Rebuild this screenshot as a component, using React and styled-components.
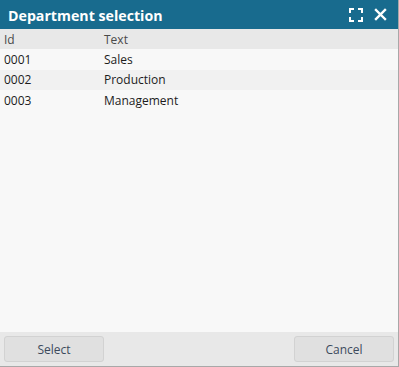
import styled, { createGlobalStyle } from "styled-components";

const GlobalStyle = createGlobalStyle`
  html, body, #root {
    margin: 0;
    padding: 0;
    height: 100%;
  }
  body {
    font-family: "Open Sans", "Liberation Sans", sans-serif;
    background: #ffffff;
  }
`;

const Dialog = styled.div`
  box-sizing: border-box;
  width: 399px;
  height: 367px;
  display: flex;
  flex-direction: column;
  border-right: 1px solid #a8a8a8;
  border-bottom: 1px solid #a8a8a8;
  background: #f8f8f8;
`;

const TitleBar = styled.div`
  height: 29px;
  flex: none;
  display: flex;
  align-items: center;
  justify-content: space-between;
  padding: 0 11px 0 8px;
  background: #186b8e;
  color: #ffffff;
`;

const Title = styled.div`
  font-size: 14.2px;
  font-weight: 700;
  padding-top: 1px;
`;

const Tools = styled.div`
  display: flex;
  align-items: center;
  gap: 11px;
`;

const ToolButton = styled.button`
  border: 0;
  background: none;
  padding: 0;
  display: flex;
  color: #ffffff;
  cursor: pointer;
`;

const Grid = styled.div`
  flex: 1;
  display: flex;
  flex-direction: column;
`;

const Row = styled.div`
  display: grid;
  grid-template-columns: 100px 1fr;
  height: ${(p) => (p.$head ? "20px" : "20.5px")};
  align-items: center;
  padding-left: 4px;
  font-size: 12px;
  color: ${(p) => (p.$head ? "#4a4a4a" : "#1c1c1c")};
  background: ${(p) => (p.$head ? "#e8e8e8" : p.$alt ? "#f1f1f1" : "#f8f8f8")};
`;

const Footer = styled.div`
  flex: none;
  height: 34px;
  display: flex;
  align-items: center;
  justify-content: space-between;
  padding: 0 4px;
  background: #e8e8e8;
`;

const Button = styled.button`
  width: 100px;
  height: 26px;
  border: 1px solid #d2d2d2;
  border-radius: 3px;
  background: #e0e0e0;
  color: #3c4a5c;
  font-family: "Open Sans", "Liberation Sans", sans-serif;
  font-size: 12px;
  cursor: pointer;
`;

const rows = [
  { id: "0001", text: "Sales" },
  { id: "0002", text: "Production" },
  { id: "0003", text: "Management" },
];

function MaximizeIcon() {
  return (
    <svg width="14" height="14" viewBox="0 0 14 14" fill="none" stroke="#fff" strokeWidth="2">
      <path d="M1 5V1h4M9 1h4v4M13 9v4H9M5 13H1V9" />
    </svg>
  );
}

function CloseIcon() {
  return (
    <svg width="13" height="13" viewBox="0 0 13 13" fill="none" stroke="#fff" strokeWidth="2.4" strokeLinecap="square">
      <path d="M2 2l9 9M11 2l-9 9" />
    </svg>
  );
}

export default function App() {
  return (
    <>
      <GlobalStyle />
      <Dialog>
        <TitleBar>
          <Title>Department selection</Title>
          <Tools>
            <ToolButton>
              <MaximizeIcon />
            </ToolButton>
            <ToolButton>
              <CloseIcon />
            </ToolButton>
          </Tools>
        </TitleBar>
        <Grid>
          <Row $head>
            <span>Id</span>
            <span>Text</span>
          </Row>
          {rows.map((r, i) => (
            <Row key={r.id} $alt={i % 2 === 1}>
              <span>{r.id}</span>
              <span>{r.text}</span>
            </Row>
          ))}
        </Grid>
        <Footer>
          <Button>Select</Button>
          <Button>Cancel</Button>
        </Footer>
      </Dialog>
    </>
  );
}
